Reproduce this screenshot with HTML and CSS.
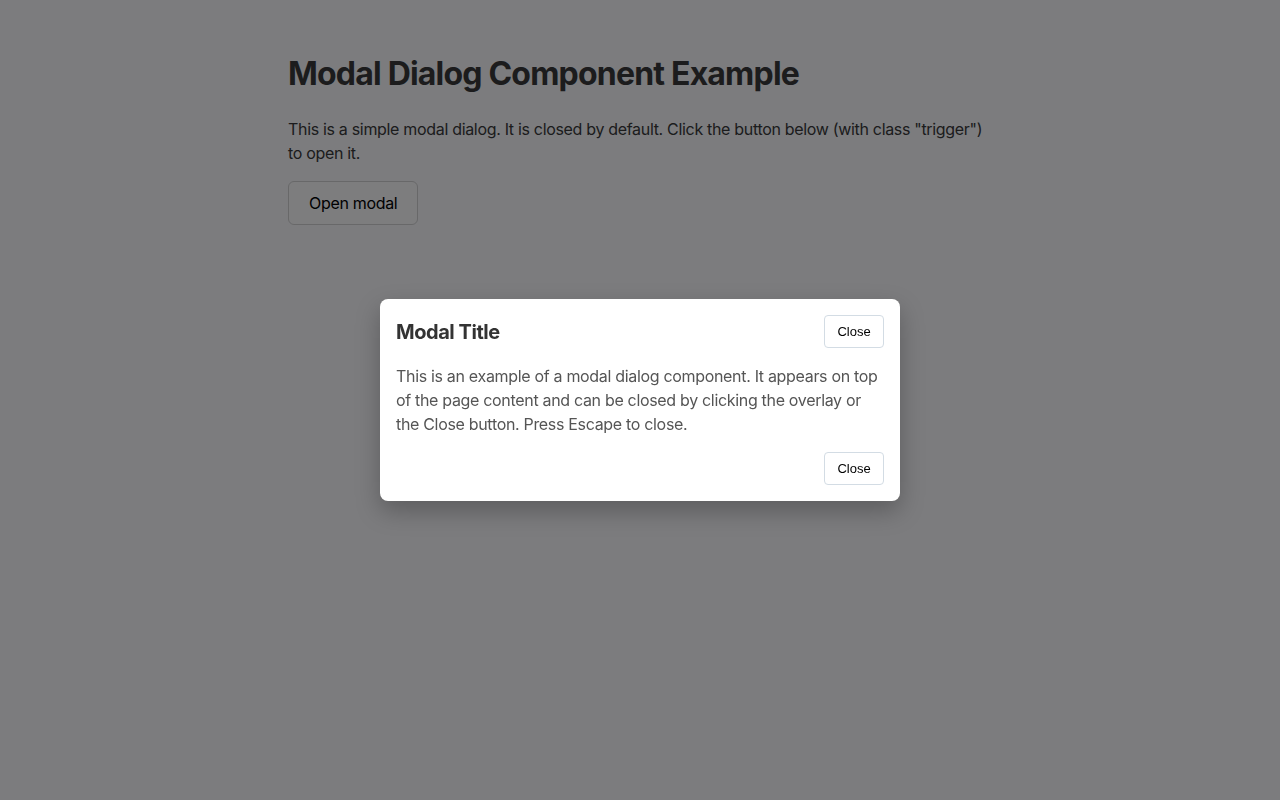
FILE: index.html
```html
<!DOCTYPE html>
<html lang="en">
<head>
    <meta charset="UTF-8">
    <meta name="viewport" content="width=device-width, initial-scale=1.0">
    <title>Modal Dialog Component Example</title>
    <link rel="stylesheet" href="styles.css">
</head>
<body>
    <div class="container">
        <h1>Modal Dialog Component Example</h1>
        <p>This is a simple modal dialog. It is closed by default. Click the button below (with class "trigger") to open it.</p>
        <button type="button" class="trigger" id="open-modal">Open modal</button>
    </div>

    <div class="modal-overlay open" id="modal">
        <div class="modal" role="dialog" aria-modal="true" aria-labelledby="modal-title">
            <div class="modal-header">
                <h2 id="modal-title">Modal Title</h2>
                <button type="button" class="close-btn">Close</button>
            </div>
            <div class="modal-body">
                <p>This is an example of a modal dialog component. It appears on top of the page content and can be closed by clicking the overlay or the Close button. Press Escape to close.</p>
            </div>
            <div class="modal-footer">
                <button type="button" class="close-btn">Close</button>
            </div>
        </div>
    </div>

    <script>
        const modal = document.getElementById('modal');
        const trigger = document.getElementById('open-modal');

        trigger.addEventListener('click', () => modal.classList.add('open'));

        // Close from either button
        document.querySelectorAll('.close-btn').forEach(btn => {
            btn.addEventListener('click', () => modal.classList.remove('open'));
        });

        // Clicking the dark area closes it too
        modal.addEventListener('click', e => {
            if (e.target === modal) modal.classList.remove('open');
        });

        document.addEventListener('keydown', e => {
            if (e.key === 'Escape') modal.classList.remove('open');
        });
    </script>
</body>
</html>
```

FILE: styles.css
```css
body {
    margin: 0;
    font-family: Inter, "Noto Sans", sans-serif;
    letter-spacing: -0.32px;
    background: #fcfdff;
    color: #383838;
}
.container {
    max-width: 704px;
    margin: 0 auto;
    padding-top: 52px;
}
h1 {
    font-size: 32px;
    font-weight: 700;
    letter-spacing: -0.8px;
    margin: 0 0 21px;
    line-height: 44px;
}
.container p {
    font-size: 16px;
    line-height: 24px;
    margin: 0 0 16px;
}
.trigger {
    font-family: Inter, "Noto Sans", sans-serif;
    font-size: 16px;
    letter-spacing: -0.32px;
    color: #000;
    background: #fefefe;
    border: 1px solid #d4d4d4;
    border-radius: 6px;
    padding: 0 20px;
    height: 44px;
    cursor: pointer;
}
.modal-overlay {
    display: none;
    position: fixed;
    inset: 0;
    background: rgba(2, 2, 4, 0.515);
    align-items: center;
    justify-content: center;
}
.modal-overlay.open {
    display: flex;
}
.modal {
    width: 520px;
    box-sizing: border-box;
    background: #fff;
    border-radius: 8px;
    padding: 16px;
    box-shadow: 0 10px 25px rgba(0, 0, 0, 0.25);
}
.modal-header {
    display: flex;
    align-items: center;
    justify-content: space-between;
}
.modal-header h2 {
    margin: 0;
    font-size: 20px;
    font-weight: 700;
    letter-spacing: -0.45px;
    color: #333;
}
.modal-body p {
    margin: 16px 0;
    font-size: 16px;
    line-height: 24px;
    color: #555;
}
.modal-footer {
    display: flex;
    justify-content: flex-end;
}
.close-btn {
    font-family: "Liberation Sans", Arial, sans-serif;
    font-size: 13px;
    letter-spacing: 0;
    color: #000;
    background: #fff;
    border: 1px solid #d3dce4;
    border-radius: 4px;
    width: 60px;
    height: 33px;
    padding: 0;
    cursor: pointer;
}
```
